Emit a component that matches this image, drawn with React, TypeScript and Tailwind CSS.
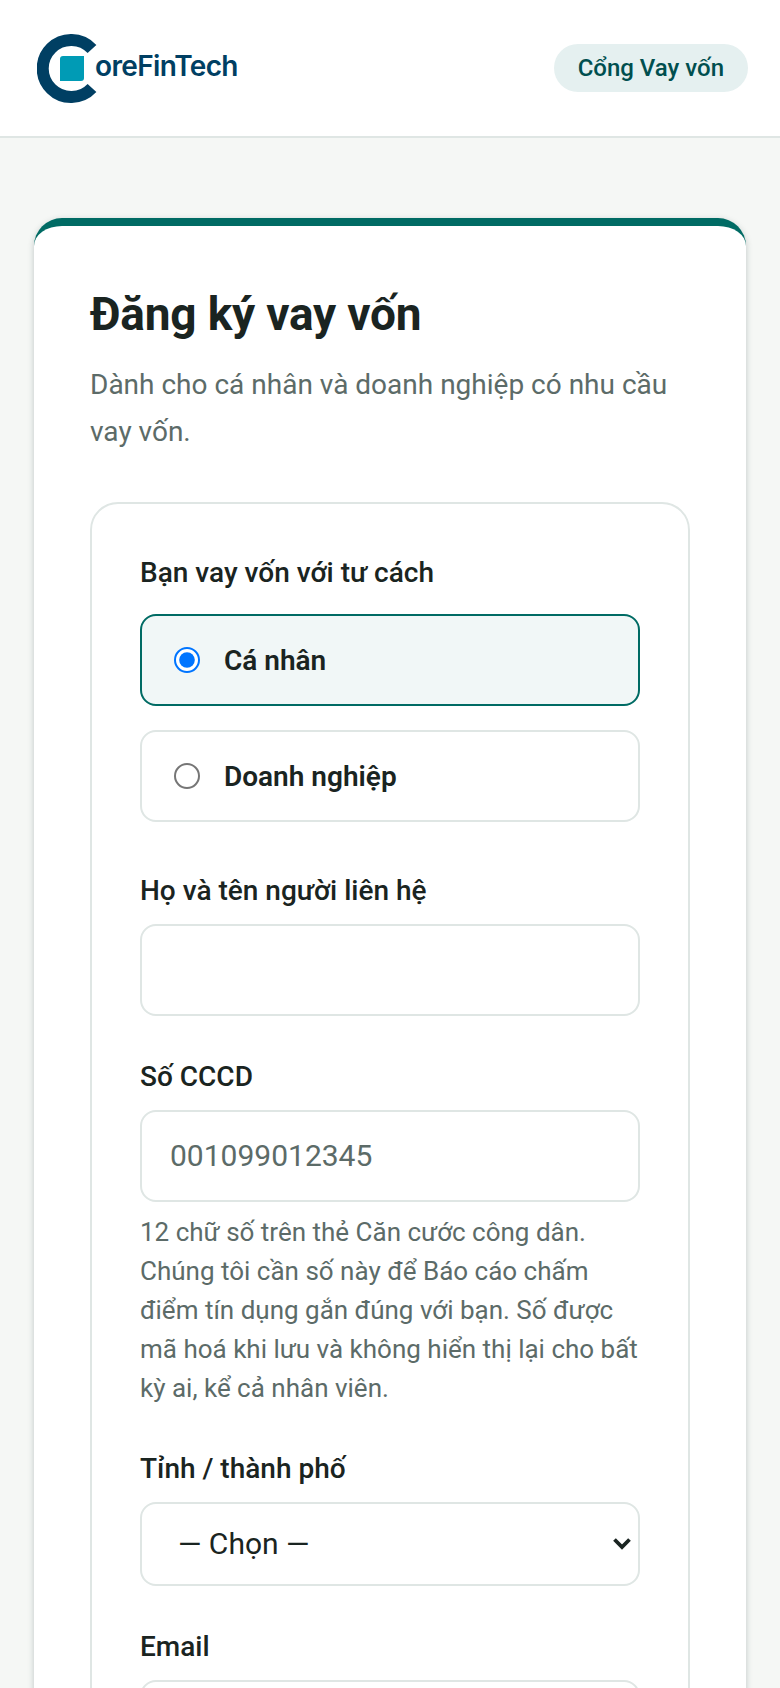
function Logo() {
  return (
    <div className="flex items-center">
      <svg width="60" height="69" viewBox="0 0 60 69" className="shrink-0">
        <path
          d="M 55 15 A 28.5 28.5 0 1 0 55 54"
          fill="none"
          stroke="#003f63"
          strokeWidth="12"
        />
        <path
          d="M 26 22 H 47 V 44 Q 47 47 44 47 H 23 V 25 Q 23 22 26 22 Z"
          fill="#009bb5"
        />
      </svg>
      <span className="ml-[-2px] mt-[-5px] font-['Inter',sans-serif] text-[28px] leading-none font-semibold tracking-[-0.65px] text-[#003f63]">
        oreFinTech
      </span>
    </div>
  );
}

function Label({ children }: { children: string }) {
  return (
    <label className="block text-[28px] leading-[40px] font-medium text-[#1a2421]">
      {children}
    </label>
  );
}

function RadioOption({ label, checked }: { label: string; checked?: boolean }) {
  return (
    <label
      className={
        checked
          ? "flex h-[92px] items-center rounded-[16px] border-2 border-[#006b64] bg-[#f1f7f7] pl-[32px]"
          : "flex h-[92px] items-center rounded-[16px] border-2 border-[#dfe6e4] bg-white pl-[32px]"
      }>
      <input
        type="radio"
        name="role"
        defaultChecked={checked}
        className="m-0 h-[13px] w-[13px] [zoom:2]"
      />
      <span className="ml-[24px] pt-[2px] text-[28px] font-semibold text-[#1a2421]">
        {label}
      </span>
    </label>
  );
}

export default function App() {
  return (
    <div className="h-[1688px] overflow-hidden bg-[#f5f7f5] font-['Roboto',sans-serif]">
      <header className="flex h-[138px] items-center justify-between border-b-2 border-[#dfe6e4] bg-white pr-[32px] pl-[37px]">
        <Logo />
        <a className="rounded-full bg-[#e5f0f0] px-[24px] py-[9px] text-[24px] leading-[30px] font-medium text-[#004f4f]">
          Cổng Vay vốn
        </a>
      </header>

      <main className="mx-[34px] mt-[80px] rounded-[28px] border-t-[8px] border-[#006b64] bg-white px-[56px] pt-[60px] pb-[60px] shadow-[0_2px_6px_rgba(30,60,60,0.25)]">
        <h1 className="text-[46px] leading-[56px] font-bold tracking-[-0.2px] text-[#1a2421]">
          Đăng ký vay vốn
        </h1>
        <p className="mt-[19px] text-[28px] leading-[47px] text-[#5c6b68]">
          Dành cho cá nhân và doanh nghiệp có nhu cầu vay vốn.
        </p>

        <section className="mt-[47px] rounded-[28px] border-2 border-[#dfe6e4] px-[48px] pt-[49px] pb-[60px]">
          <Label>Bạn vay vốn với tư cách</Label>
          <div className="mt-[21px] flex flex-col gap-[24px]">
            <RadioOption label="Cá nhân" checked />
            <RadioOption label="Doanh nghiệp" />
          </div>

          <div className="mt-[49px]">
            <Label>Họ và tên người liên hệ</Label>
            <input
              type="text"
              className="mt-[13px] block h-[92px] w-full rounded-[16px] border-2 border-[#dfe6e4] px-[28px] text-[30px] outline-none"
            />
          </div>

          <div className="mt-[41px]">
            <Label>Số CCCD</Label>
            <input
              type="text"
              placeholder="001099012345"
              className="mt-[13px] block h-[92px] w-full rounded-[16px] border-2 border-[#dfe6e4] px-[28px] pb-[2px] text-[30px] outline-none placeholder:text-[#5c6b68]"
            />
            <p className="mt-[11px] text-[26px] leading-[39px] text-[#5c6b68]">
              12 chữ số trên thẻ Căn cước công dân. Chúng tôi cần số này để Báo
              cáo chấm điểm tín dụng gắn đúng với bạn. Số được mã hoá khi lưu
              và không hiển thị lại cho bất kỳ ai, kể cả nhân viên.
            </p>
          </div>

          <div className="mt-[41px]">
            <Label>Tỉnh / thành phố</Label>
            <div className="relative mt-[13px]">
              <select className="block h-[84px] w-full appearance-none rounded-[16px] border-2 border-[#dfe6e4] bg-white pb-[2px] pl-[36px] text-[30px] text-[#1a2421] outline-none">
                <option>— Chọn —</option>
              </select>
              <svg
                width="20"
                height="14"
                viewBox="0 0 20 14"
                className="pointer-events-none absolute top-[35px] right-[8px]">
                <path
                  d="M 2.5 2.5 L 10 10 L 17.5 2.5"
                  fill="none"
                  stroke="#1a2421"
                  strokeWidth="3.8"
                />
              </svg>
            </div>
          </div>

          <div className="mt-[41px]">
            <Label>Email</Label>
            <input
              type="email"
              className="mt-[13px] block h-[92px] w-full rounded-[16px] border-2 border-[#dfe6e4] px-[28px] text-[30px] outline-none"
            />
          </div>
        </section>
      </main>
    </div>
  );
}
